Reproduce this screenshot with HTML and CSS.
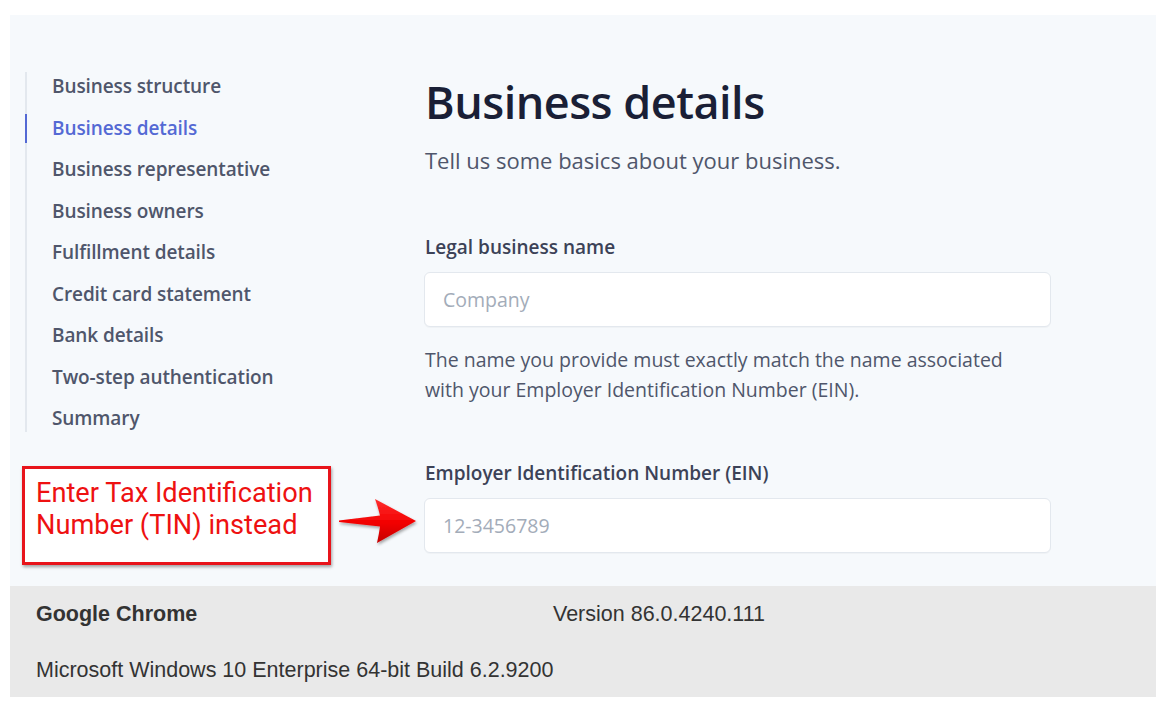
FILE: index.html
```html
<!DOCTYPE html>
<html>
<head>
<meta charset="utf-8">
<link rel="stylesheet" href="styles.css">
</head>
<body>
<div class="frame">
  <div class="panel">
    <div class="left">
      <ul class="nav">
        <li>Business structure</li>
        <li class="active">Business details</li>
        <li>Business representative</li>
        <li>Business owners</li>
        <li>Fulfillment details</li>
        <li>Credit card statement</li>
        <li>Bank details</li>
        <li>Two-step authentication</li>
        <li>Summary</li>
      </ul>
      <div class="callout">
        <div class="callout-box">
          <div class="callout-line">Enter Tax Identification</div>
          <div class="callout-line">Number (TIN) instead</div>
        </div>
        <svg class="arrow" width="86" height="54" viewBox="0 0 86 54">
          <defs>
            <linearGradient id="ag" x1="0" y1="0" x2="0" y2="1">
              <stop offset="0" stop-color="#ff3030"/>
              <stop offset="0.55" stop-color="#f20000"/>
              <stop offset="1" stop-color="#c40000"/>
            </linearGradient>
            <filter id="sh" x="-20%" y="-20%" width="140%" height="150%">
              <feDropShadow dx="1" dy="2" stdDeviation="1.5" flood-color="#000" flood-opacity="0.35"/>
            </filter>
          </defs>
          <path filter="url(#sh)" fill="url(#ag)" d="M3,25.5 L44,20.5 Q42,12 39,4 L80,26 L41,48 Q43,39 44,31.5 L3,27 Z"/>
        </svg>
      </div>
    </div>
    <div class="main">
      <h1 class="title">Business details</h1>
      <p class="subtitle">Tell us some basics about your business.</p>
      <div class="field first">
        <div class="label">Legal business name</div>
        <div class="input">Company</div>
        <p class="help">The name you provide must exactly match the name associated<br>with your Employer Identification Number (EIN).</p>
      </div>
      <div class="field second">
        <div class="label">Employer Identification Number (EIN)</div>
        <div class="input">12-3456789</div>
      </div>
    </div>
  </div>
  <div class="footer">
    <div class="f-name">Google Chrome</div>
    <div class="f-ver">Version 86.0.4240.111</div>
    <div class="f-os">Microsoft Windows 10 Enterprise 64-bit Build 6.2.9200</div>
  </div>
</div>
</body>
</html>
```

FILE: styles.css
```css
* { box-sizing: border-box; }
html, body { margin: 0; padding: 0; background: #ffffff; }
body { font-family: "Open Sans", "Noto Sans", sans-serif; }

.frame {
  margin: 15px 12px 0 10px;
  width: 1146px;
}

.panel {
  background: #f6f9fc;
  height: 571px;
  display: flex;
  padding: 57px 0 0 15px;
}

.left {
  width: 398px;
  display: flex;
  flex-direction: column;
}

.nav {
  list-style: none;
  margin: 0;
  padding: 0;
  border-left: 2px solid #e3e8ee;
  display: flex;
  flex-direction: column;
  gap: 13.5px;
}
.nav li {
  position: relative;
  padding-left: 25px;
  font-size: 19px;
  line-height: 28px;
  font-weight: 600;
  color: #4f566b;
  letter-spacing: -0.1px;
}
.nav li.active { color: #5469d4; }
.nav li.active::before {
  content: "";
  position: absolute;
  left: -2px;
  top: 0;
  width: 2px;
  height: 29px;
  background: #5469d4;
}

.callout {
  display: flex;
  align-items: center;
  margin-top: 34px;
  margin-left: -3px;
}
.callout-box {
  width: 309px;
  height: 99px;
  border: 3px solid #e8141b;
  background: #ffffff;
  box-shadow: 1px 2px 3px rgba(0,0,0,0.35);
  color: #ee1111;
  font-family: Roboto, "Open Sans", sans-serif;
  font-size: 27.2px;
  padding: 8px 0 0 11px;
  white-space: nowrap;
  display: flex;
  flex-direction: column;
}
.callout-line {
  line-height: 32px;
  height: 32px;
}
.arrow { margin-left: 5px; margin-top: 12px; }

.main {
  width: 627px;
  margin-left: 1px;
}
.title {
  margin: 0 0 0 1px;
  font-size: 45px;
  line-height: 60px;
  font-weight: 600;
  color: #1a1f36;
  letter-spacing: -0.5px;
}
.subtitle {
  margin: 13px 0 0 1px;
  font-size: 22px;
  line-height: 30px;
  color: #4f566b;
}
.field.first { margin-top: 59px; }
.field.second { margin-top: 55px; }
.label {
  margin-left: 1px;
  font-size: 19px;
  line-height: 26px;
  font-weight: 600;
  color: #3c4257;
}
.input {
  margin-top: 12px;
  height: 55px;
  background: #ffffff;
  border: 1px solid #e3e8ee;
  border-radius: 6px;
  box-shadow: 0 1px 1px rgba(0,0,0,0.03);
  padding-left: 18px;
  font-size: 19.5px;
  line-height: 53px;
  color: #a3acb9;
}
.help {
  margin: 18px 0 0 1px;
  font-size: 19.5px;
  line-height: 30px;
  color: #4f566b;
  white-space: nowrap;
}

.footer {
  background: #e9e9e9;
  height: 111px;
  display: grid;
  grid-template-columns: 517px 1fr;
  grid-template-rows: 56px 56px;
  padding: 0 0 0 26px;
  font-family: "Liberation Sans", Arial, sans-serif;
  font-size: 21.5px;
  color: #333333;
  align-items: center;
}
.f-name { font-weight: bold; padding-top: 1px; }
.f-ver { padding-top: 1px; }
.f-os { grid-column: 1 / 3; }
```
